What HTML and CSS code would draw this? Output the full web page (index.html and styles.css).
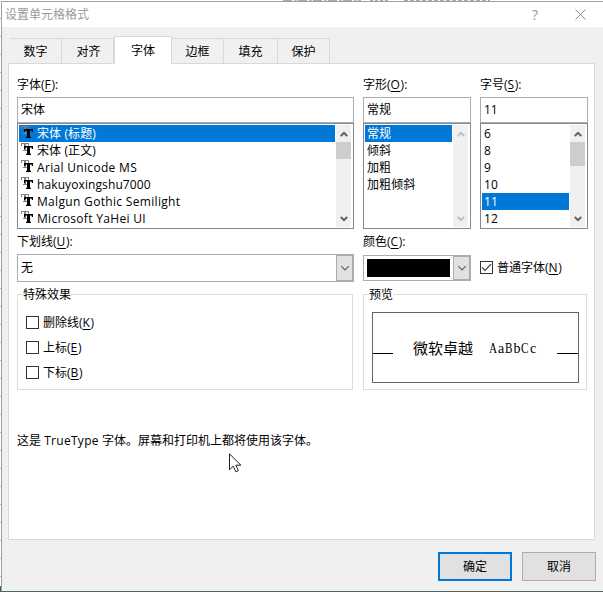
FILE: index.html
```html
<!DOCTYPE html>
<html lang="zh-CN">
<head>
<meta charset="utf-8">
<title>设置单元格格式</title>
<link rel="stylesheet" href="styles.css">
</head>
<body>
<svg width="0" height="0" class="defs">
  <symbol id="tt" viewBox="0 0 12 12"><path class="tt-back" d="M0 0h8v3h-1v-2h-2v6h1v1h-4v-1h1v-6h-2v2h-1z"/><path class="tt-front" d="M3 3h9v3h-1l-.6-1.6h-1.4v6.2l1 .4v1h-5v-1l1-.4v-6.2h-1.4l-.6 1.6h-1z"/></symbol>
  <symbol id="up" viewBox="0 0 8 6"><path d="M.8 5 4 1.8 7.2 5"/></symbol>
  <symbol id="down" viewBox="0 0 8 6"><path d="M.8 1 4 4.2 7.2 1"/></symbol>
</svg>
<div class="screen">
  <div class="sheet-title"><i class="dashes dashes-1"></i><i class="dashes dashes-2"></i><i class="dashes dashes-3"></i></div>
  <div class="sheet-edge"><span class="sheet-corner"></span></div>
  <main class="dialog">
    <header class="titlebar">
      <span class="title">设置单元格格式</span>
      <span class="help">?</span>
      <svg class="close" width="11" height="11" viewBox="0 0 11 11"><path d="M.5.5l10 10M10.5.5l-10 10"/></svg>
    </header>
    <nav class="tabs">
      <span class="tab tab-1">数字</span><span class="tab tab-2">对齐</span><span class="tab tab-3 active">字体</span><span class="tab tab-4">边框</span><span class="tab tab-5">填充</span><span class="tab tab-6">保护</span>
    </nav>
    <section class="panel">
      <div class="columns">
        <div>
          <div class="label">字体(<u>F</u>):</div>
          <div class="input">宋体</div>
          <div class="list">
            <div class="items">
              <div class="item selected"><svg class="tt"><use href="#tt"/></svg>宋体 (标题)</div>
              <div class="item"><svg class="tt"><use href="#tt"/></svg>宋体 (正文)</div>
              <div class="item latin"><svg class="tt"><use href="#tt"/></svg>Arial Unicode MS</div>
              <div class="item"><svg class="tt"><use href="#tt"/></svg>hakuyoxingshu7000</div>
              <div class="item latin"><svg class="tt"><use href="#tt"/></svg>Malgun Gothic Semilight</div>
              <div class="item latin"><svg class="tt"><use href="#tt"/></svg>Microsoft YaHei UI</div>
            </div>
            <div class="scroll"><svg class="arrow"><use href="#up"/></svg><i class="thumb"></i><svg class="arrow"><use href="#down"/></svg></div>
          </div>
        </div>
        <div>
          <div class="label">字形(<u>O</u>):</div>
          <div class="input">常规</div>
          <div class="list">
            <div class="items">
              <div class="item selected">常规</div>
              <div class="item">倾斜</div>
              <div class="item">加粗</div>
              <div class="item">加粗倾斜</div>
            </div>
            <div class="scroll disabled"><svg class="arrow"><use href="#up"/></svg><svg class="arrow"><use href="#down"/></svg></div>
          </div>
        </div>
        <div>
          <div class="label">字号(<u>S</u>):</div>
          <div class="input">11</div>
          <div class="list">
            <div class="items">
              <div class="item">6</div>
              <div class="item">8</div>
              <div class="item">9</div>
              <div class="item">10</div>
              <div class="item selected">11</div>
              <div class="item">12</div>
            </div>
            <div class="scroll"><svg class="arrow"><use href="#up"/></svg><i class="thumb tall"></i><svg class="arrow"><use href="#down"/></svg></div>
          </div>
        </div>
      </div>
      <div class="columns second">
        <div>
          <div class="label">下划线(<u>U</u>):</div>
          <div class="combo"><span class="value">无</span><span class="drop"><svg class="chev"><use href="#down"/></svg></span></div>
        </div>
        <div>
          <div class="label">颜色(<u>C</u>):</div>
          <div class="combo color"><span class="swatch"></span><span class="drop"><svg class="chev"><use href="#down"/></svg></span></div>
        </div>
        <div class="check normal"><span class="box"><svg width="11" height="11" viewBox="0 0 11 11"><path d="M1 5.4 4 8.4 10 2.2"/></svg></span>普通字体(<u>N</u>)</div>
      </div>
      <div class="groups">
        <div class="group effects">
          <span class="legend">特殊效果</span>
          <div class="check"><span class="box"></span>删除线(<u>K</u>)</div>
          <div class="check"><span class="box"></span>上标(<u>E</u>)</div>
          <div class="check"><span class="box"></span>下标(<u>B</u>)</div>
        </div>
        <div class="group preview">
          <span class="legend">预览</span>
          <div class="sample"><i class="rule"></i><span class="sample-text"><span class="sample-cjk">微软卓越</span><span class="sample-latin"><b>A</b><b>a</b><b>B</b><b>b</b><b>C</b><b>c</b></span></span><i class="rule"></i></div>
        </div>
      </div>
      <p class="note">这是 <span class="truetype">TrueType</span> 字体。屏幕和打印机上都将使用该字体。</p>
    </section>
    <footer class="buttons"><span class="button primary">确定</span><span class="button">取消</span></footer>
  </main>
  <svg class="cursor" width="13" height="20" viewBox="0 0 13 20"><path d="M.5.8v16l3.7-3.6 2.7 5.6 2.5-1.2-2.6-5.4h5z"/></svg>
</div>
</body>
</html>
```

FILE: styles.css
```css
* { box-sizing: border-box; }
body {
  margin: 0;
  overflow: hidden;
  font: 12px/17px "Open Sans", "Noto Sans CJK SC", sans-serif;
  color: #000;
}
.defs { position: absolute; }
u {
  letter-spacing: .7px;
  text-underline-offset: 2px;
  text-decoration-thickness: 1px;
  text-decoration-skip-ink: none;
}

.screen {
  position: relative;
  width: 603px;
  height: 592px;
  display: grid;
  grid-template: 1px 1fr 1px / 1px 1fr;
  background: #fff;
  overflow: hidden;
}
.sheet-title {
  grid-column: 1 / 3;
  display: flex;
  gap: 9px;
  padding-left: 283px;
}
.dashes { height: 1px; background: repeating-linear-gradient(90deg, #aaa 0 9px, #fff 9px 11px, #bbb 11px 14px, #fff 14px 15px); }
.dashes-1 { width: 78px; }
.dashes-2 { width: 20px; background: repeating-linear-gradient(90deg, #aaa 0 3px, #fff 3px 5px); }
.dashes-3 { width: 86px; margin-left: 5px; background: repeating-linear-gradient(90deg, #aaa 0 4px, #fff 4px 6px); }
.sheet-edge {
  display: flex;
  align-items: flex-end;
  background: repeating-linear-gradient(#fff 0 17px, #bbb 17px 18px);
}
.sheet-corner { width: 1px; height: 5px; background: #217346; }
.screen::after { content: ""; grid-column: 1 / 3; background: #46695a; }

.dialog {
  display: flex;
  flex-direction: column;
  background: #f0f0f0;
  border-top: 1px solid #a0a0a0;
  border-left: 1px solid #a0a0a0;
}
.titlebar {
  flex: none;
  height: 25px;
  display: flex;
  align-items: center;
  padding: 0 17px 0 3px;
  background: #fff;
  color: #999;
}
.title { flex: 1; }
.help { font-size: 14px; width: 8px; margin-right: 35px; }
.close { stroke: #8c8c8c; fill: none; }

.tabs {
  flex: none;
  display: flex;
  align-items: flex-end;
  height: 36px;
  padding-left: 8px;
}
.tab {
  height: 25px;
  border-top: 1px solid #d9d9d9;
  border-right: 1px solid #d9d9d9;
  text-align: center;
  line-height: 26px;
}
.tab-1 { width: 52px; }
.tab-2 { width: 52px; padding-left: 2px; }
.tab-3 { width: 58px; }
.tab-4 { width: 52px; }
.tab-5 { width: 54px; }
.tab-6 { width: 52px; }
.tab.active {
  position: relative;
  height: 28px;
  margin-bottom: -1px;
  border-left: 1px solid #d9d9d9;
  background: #fff;
  line-height: 28px;
}

.panel {
  flex: none;
  height: 477px;
  width: 587px;
  margin-left: 6px;
  padding: 12px 6px 0 8px;
  background: #fff;
  border: 1px solid #d9d9d9;
}
.columns {
  display: grid;
  grid-template-columns: 337px 108px 108px;
  gap: 9px;
}
.label { height: 21px; line-height: 18px; }
.input {
  height: 26px;
  border: 1px solid #abadb3;
  padding-left: 3px;
  line-height: 23px;
}
.list {
  height: 106px;
  display: flex;
  justify-content: space-between;
  border: 1px solid #828790;
  padding: 1px;
}
.items { flex: 1; }
.item {
  height: 17px;
  display: flex;
  align-items: center;
  padding-left: 2px;
  white-space: pre;
  letter-spacing: .1px;
}
.item.latin { letter-spacing: .32px; }
.selected { background: #0078d7; color: #fff; }
.tt { flex: none; width: 12px; height: 12px; margin: 0 4px 3px 0; }
.tt-back { fill: #808080; }
.tt-front { fill: #000; }
.scroll {
  width: 15px;
  margin: 0 1px;
  display: flex;
  flex-direction: column;
  align-items: center;
  background: #f0f0f0;
}
.arrow { width: 8px; height: 6px; margin: 6px 0 5px; fill: none; stroke: #606060; stroke-width: 2; }
.arrow:last-child { margin: auto 0 5px; }
.disabled .arrow { stroke: #bfbfbf; }
.thumb { width: 15px; height: 17px; background: #cdcdcd; }
.thumb.tall { height: 24px; }

.second { margin-top: 4px; }
.combo {
  display: flex;
  height: 28px;
  border: 1px solid #abadb3;
}
.value { flex: 1; padding-left: 3px; line-height: 25px; }
.drop {
  display: flex;
  align-items: center;
  justify-content: center;
  width: 17px;
  background: #e1e1e1;
  border: 1px solid #acacac;
}
.chev { width: 10px; height: 7px; fill: none; stroke: #606060; stroke-width: 1; }
.color { height: 26px; margin-top: 1px; padding-left: 3px; }
.swatch { flex: 1; margin: 3px 3px 3px 0; background: #000; }

.check { display: flex; align-items: center; }
.box {
  flex: none;
  width: 13px;
  height: 13px;
  margin-right: 4px;
  border: 1px solid #333;
}
.box svg { display: block; fill: none; stroke: #333; stroke-width: 1.2; }
.normal { height: 17px; margin-top: 26px; }

.groups {
  display: grid;
  grid-template-columns: 336px 224px;
  gap: 10px;
  margin-top: 12px;
}
.group { height: 96px; border: 1px solid #dcdcdc; }
.legend {
  display: block;
  width: max-content;
  height: 17px;
  margin: -9px 0 0 5px;
  background: #fff;
}
.effects .check { height: 25px; padding-left: 8px; }
.effects .legend { margin-bottom: 7px; }
.sample {
  width: 207px;
  height: 71px;
  margin: 9px 0 0 8px;
  display: flex;
  justify-content: space-between;
  border: 1px solid #646464;
}
.rule { width: 20px; height: 1px; margin-top: 40px; background: #000; }
.rule:last-child { width: 21px; }
.sample-text { display: flex; margin-top: 24px; line-height: 22px; }
.sample-cjk { font-size: 15px; width: 76px; }
.sample-latin {
  display: grid;
  grid-template-columns: repeat(6, 8px);
  justify-items: center;
  padding-top: 1px;
  font-family: "Liberation Serif", serif;
  font-size: 14px;
}
.sample-latin b { font-weight: 400; }
.sample-latin b:nth-child(odd) { transform: scaleX(.8); justify-self: center; margin: 0 -2px; }
.note { margin: 42px 0 0; }
.truetype { letter-spacing: .3px; }

.buttons { display: flex; gap: 10px; margin: 12px 0 0 436px; }
.button {
  width: 74px;
  height: 29px;
  border: 1px solid #adadad;
  background: #e1e1e1;
  text-align: center;
  line-height: 27px;
}
.primary { border: 2px solid #0078d7; line-height: 25px; }
.cursor { position: absolute; left: 229px; top: 453px; fill: #fff; stroke: #1e1e28; }
```
